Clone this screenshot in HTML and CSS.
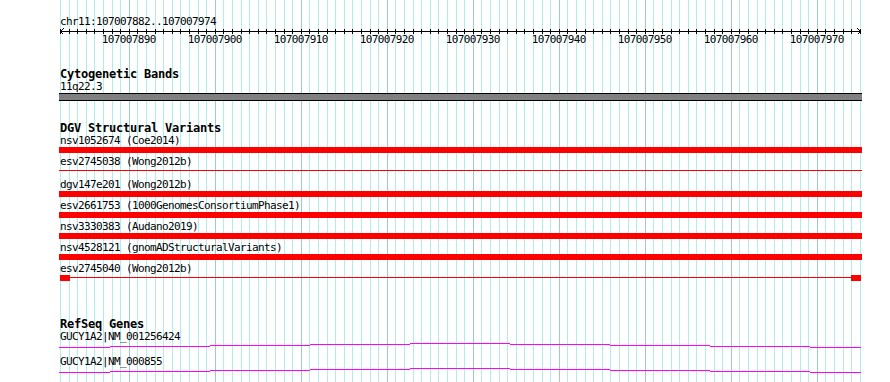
FILE: index.html
```html
<!DOCTYPE html>
<html lang="en">
<head>
    <meta charset="UTF-8">
    <title>chr11:107007882..107007974</title>
    <link rel="stylesheet" href="styles.css">
</head>
<body>

    <div class="browser">
        <!-- grid behind all tracks: one line per bp, darker every 10 bp -->
        <svg class="grid" width="890" height="382">
            <defs>
                <pattern id="bp-grid" x="60" y="0" width="86" height="10" patternUnits="userSpaceOnUse">
                    <rect class="minor" x="0" width="1" height="10"/>
                    <rect class="minor" x="9" width="1" height="10"/>
                    <rect class="minor" x="17" width="1" height="10"/>
                    <rect class="minor" x="26" width="1" height="10"/>
                    <rect class="minor" x="34" width="1" height="10"/>
                    <rect class="minor" x="43" width="1" height="10"/>
                    <rect class="minor" x="52" width="1" height="10"/>
                    <rect class="minor" x="60" width="1" height="10"/>
                    <rect class="major" x="69" width="1" height="10"/>
                    <rect class="minor" x="77" width="1" height="10"/>
                </pattern>
                <pattern id="bp-ticks" x="60" y="29" width="86" height="5" patternUnits="userSpaceOnUse">
                    <rect x="0" width="1" height="5"/>
                    <rect x="9" width="1" height="5"/>
                    <rect x="17" width="1" height="5"/>
                    <rect x="26" width="1" height="5"/>
                    <rect x="34" width="1" height="5"/>
                    <rect x="43" width="1" height="5"/>
                    <rect x="52" width="1" height="5"/>
                    <rect x="60" width="1" height="5"/>
                    <rect x="69" width="1" height="5"/>
                    <rect x="77" width="1" height="5"/>
                </pattern>
            </defs>
            <rect x="60" y="0" width="801" height="382" fill="url(#bp-grid)"/>
        </svg>

        <!-- ruler -->
        <svg class="ruler" width="890" height="48">
            <text x="60" y="25">chr11:107007882..107007974</text>
            <path class="axis" d="M60 31.5H861M63.5 28.5L60.5 31.5L63.5 34.5M857.5 28.5L860.5 31.5L857.5 34.5"/>
            <rect x="60" y="29" width="801" height="5" fill="url(#bp-ticks)"/>
            <g class="tick-labels">
                <text x="128.8" y="43">107007890</text>
                <text x="214.8" y="43">107007900</text>
                <text x="300.8" y="43">107007910</text>
                <text x="386.8" y="43">107007920</text>
                <text x="472.8" y="43">107007930</text>
                <text x="558.8" y="43">107007940</text>
                <text x="644.8" y="43">107007950</text>
                <text x="730.8" y="43">107007960</text>
                <text x="816.8" y="43">107007970</text>
            </g>
        </svg>

        <section class="track cyto">
            <h2 class="track-title">Cytogenetic Bands</h2>
            <div class="feat-label">11q22.3</div>
            <div class="band"></div>
        </section>

        <section class="track dgv">
            <h2 class="track-title">DGV Structural Variants</h2>
            <div class="features">
                <div class="feature">
                    <div class="feat-label">nsv1052674 (Coe2014)</div>
                    <div class="glyph"><div class="bar"></div></div>
                </div>
                <div class="feature">
                    <div class="feat-label">esv2745038 (Wong2012b)</div>
                    <div class="glyph"><div class="bar thin"></div></div>
                </div>
                <div class="feature">
                    <div class="feat-label">dgv147e201 (Wong2012b)</div>
                    <div class="glyph"><div class="bar"></div></div>
                </div>
                <div class="feature">
                    <div class="feat-label">esv2661753 (1000GenomesConsortiumPhase1)</div>
                    <div class="glyph"><div class="bar"></div></div>
                </div>
                <div class="feature">
                    <div class="feat-label">nsv3330383 (Audano2019)</div>
                    <div class="glyph"><div class="bar"></div></div>
                </div>
                <div class="feature">
                    <div class="feat-label">nsv4528121 (gnomADStructuralVariants)</div>
                    <div class="glyph"><div class="bar"></div></div>
                </div>
                <div class="feature">
                    <div class="feat-label">esv2745040 (Wong2012b)</div>
                    <div class="glyph split">
                        <div class="box"></div>
                        <div class="bar thin"></div>
                        <div class="box"></div>
                    </div>
                </div>
            </div>
        </section>

        <section class="track genes">
            <h2 class="track-title">RefSeq Genes</h2>
            <div class="feature">
                <div class="feat-label">GUCY1A2|NM_001256424</div>
                <svg class="hat" width="803" height="13">
                    <path d="M0 4.5H51M51 3.5H151M151 2.5H251M251 1.5H351M351 0.5H451M451 1.5H551M551 2.5H651M651 3.5H751M751 4.5H802"/>
                </svg>
            </div>
            <div class="feature">
                <div class="feat-label">GUCY1A2|NM_000855</div>
                <svg class="hat" width="803" height="13">
                    <path d="M0 4.5H51M51 3.5H151M151 2.5H251M251 1.5H351M351 0.5H451M451 1.5H551M551 2.5H651M651 3.5H751M751 4.5H802"/>
                </svg>
            </div>
        </section>
    </div>

</body>
</html>
```

FILE: styles.css
```css
body {
    margin: 0;
    background: #fff;
    color: #000;
    font-family: "DejaVu Sans Mono", "Liberation Mono", monospace;
}

.browser {
    position: relative;
    width: 890px;
    height: 382px;
    overflow: hidden;
}

/* grid sits under everything */
.grid {
    position: absolute;
    top: 0;
    left: 0;
}

.grid .minor {
    fill: #aeeeee;
}

.grid .major {
    fill: #9cc6e6;
}

/* ruler */
.ruler {
    position: relative;
    display: block;
}

.ruler text {
    font-family: "DejaVu Sans Mono", "Liberation Mono", monospace;
    font-size: 11px;
    letter-spacing: -0.62px;
    fill: #000;
}

.ruler .tick-labels text {
    text-anchor: middle;
}

.ruler .axis {
    fill: none;
    stroke: #000;
    stroke-width: 1;
    shape-rendering: crispEdges;
}

#bp-ticks rect {
    fill: #000;
}

/* tracks */
.track {
    position: relative;
    margin-left: 59px;
    width: 803px;
}

.track-title {
    margin: 0;
    padding-left: 1px;
    font-size: 12px;
    font-weight: bold;
    letter-spacing: -0.22px;
    line-height: 14px;
}

.feat-label {
    padding-left: 1px;
    font-size: 11px;
    letter-spacing: -0.62px;
    line-height: 12px;
    white-space: nowrap;
}

.cyto {
    margin-top: 19px;
}

.dgv {
    margin-top: 20px;
}

.genes {
    margin-top: 36px;
}

/* cytoband */
.band {
    height: 6px;
    background: #808080;
    border-top: 1px solid #000;
    border-bottom: 1px solid #000;
}

/* DGV rows */
.features {
    display: flex;
    flex-direction: column;
    gap: 3px;
}

.glyph {
    height: 6px;
}

.bar {
    height: 6px;
    background: #ff0000;
}

.bar.thin {
    height: 1px;
    margin-top: 2px;
}

.glyph.split {
    display: flex;
    align-items: flex-start;
    padding: 0 1px;
}

.glyph.split .bar {
    flex: 1;
}

.box {
    width: 10px;
    height: 6px;
    background: #ff0000;
}

/* gene hats */
.hat {
    display: block;
}

.hat path {
    fill: none;
    stroke: #ff00ff;
    stroke-width: 1;
    shape-rendering: crispEdges;
}
```
